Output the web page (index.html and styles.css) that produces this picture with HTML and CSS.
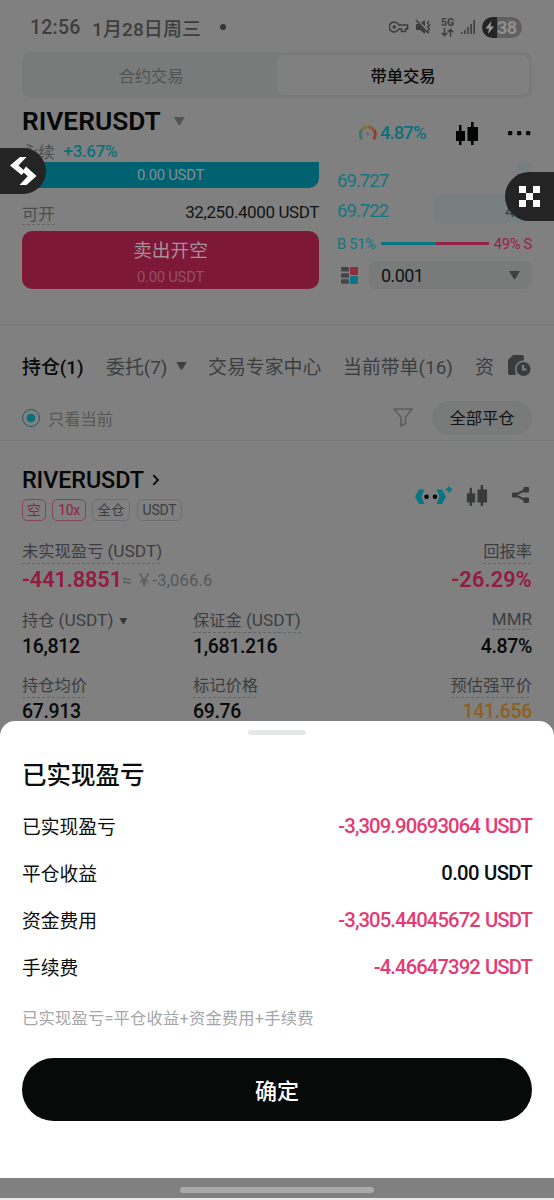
FILE: index.html
```html
<!DOCTYPE html>
<html lang="zh-CN">
<head>
<meta charset="utf-8">
<title>已实现盈亏</title>
<link rel="stylesheet" href="styles.css">
</head>
<body>
<div class="app">
  <main class="page">
    <div class="status">
      <span class="time">12:56</span><span class="date">1月28日周三</span><i class="dot"></i>
      <div class="status-icons">
        <svg width="20" height="14" viewBox="0 0 20 14" fill="none" stroke="#3d3d3d" stroke-width="1.6"><path d="M9.8 5A5 5 0 1 0 9.8 9H12.5V11.5H16.5V9H18.5V5Z"/><circle cx="5.3" cy="7" r="1" fill="#3d3d3d"/></svg>
        <svg class="mute" width="17" height="16" viewBox="0 0 17 16"><path d="M1 5H4L10 11V15L5 11H1ZM6 3.5L10 1V7.5Z" fill="#3d3d3d"/><path d="M1 1L13 14M14 2L12.4 4L14.6 6L12.4 8L14.6 10L12.4 12L14 14" fill="none" stroke="#3d3d3d" stroke-width="1.4"/></svg>
        <span class="net"><b>5G</b><svg width="13" height="9" viewBox="0 0 13 9" fill="none" stroke="#3d3d3d" stroke-width="1.4"><path d="M3.5 0V7.5M.8 4.8L3.5 7.8L6.2 4.8M9.5 9V1.5M6.8 4.2L9.5 1.2L12.2 4.2"/></svg></span>
        <svg class="signal" width="15" height="16" viewBox="0 0 15 16" fill="#3d3d3d"><path d="M0 13h1.5v2H0zM3.1 11h1.5v4H3.1zM6.2 8h1.5v7H6.2zM9.3 5h1.6v10H9.3zM12.4 1h1.6v14h-1.6z"/></svg>
        <span class="battery"><svg width="15" height="21" viewBox="0 0 15 21"><path d="M9.5 4L3.5 11.5H7L6 17L12 9.5H8.4Z" fill="#999"/></svg><b>38</b></span>
      </div>
    </div>

    <div class="segment"><span>合约交易</span><span class="active">带单交易</span></div>

    <header class="ticker">
      <div>
        <div class="pair"><span>RIVERUSDT</span><i class="tri"></i></div>
        <div class="change"><span class="perp">永续</span><b>+3.67%</b></div>
      </div>
      <div class="tools">
        <svg width="18" height="17" viewBox="0 0 18 17" fill="none" stroke-width="3"><path d="M3.2 14.2A7.2 7.2 0 0 1 3 4.7" stroke="#3d7765"/><path d="M3 4.7A7.2 7.2 0 0 1 9 2" stroke="#817638"/><path d="M9 2A7.2 7.2 0 0 1 15 5.2" stroke="#8b5d37"/><path d="M15 5.2A7.2 7.2 0 0 1 14.5 14.2" stroke="#8c3d38"/><path d="M7 7.5L10 10.5" stroke="#626464" stroke-width="1.5"/></svg>
        <span class="risk">4.87%</span>
        <svg class="candle" width="24" height="25" viewBox="0 0 24 25" fill="#020303"><path d="M4 4h2.5v6H10v10H6.5v4H4v-4H1V10h3zM16 1h2.6v5H23v14h-4.4v4H16v-4h-3.5V6H16z"/></svg>
        <svg class="more" width="24" height="6" viewBox="0 0 24 6" fill="#020303"><rect x="1" y="1" width="4.3" height="4.3" rx="1.2"/><rect x="10" y="1" width="4.3" height="4.3" rx="1.2"/><rect x="19" y="1" width="4.3" height="4.3" rx="1.2"/></svg>
      </div>
    </header>

    <section class="trade">
      <div class="order">
        <div class="buy">0.00 USDT</div>
        <div class="avail"><span class="dash">可开</span><span class="amount">32,250.4000 USDT</span></div>
        <div class="sell"><span>卖出开空</span><small>0.00 USDT</small></div>
      </div>
      <div class="book">
        <div class="level first"><span>69.727</span><i>5</i></div>
        <div class="level"><span>69.722</span><i>4.</i></div>
        <div class="ratio"><span>B 51%</span><i></i><span class="short">49% S</span></div>
        <div class="depth">
          <svg width="17" height="17" viewBox="0 0 17 17"><g fill="#434546"><rect width="8" height="4.5" rx="1"/><rect y="6.2" width="8" height="4.5" rx="1"/><rect y="12.3" width="8" height="4.5" rx="1"/></g><rect x="9" width="8" height="8" rx="1" fill="#8f2d3d"/><rect x="9" y="9" width="8" height="8" rx="1" fill="#087684"/></svg>
          <div class="select"><span>0.001</span><i class="tri dark"></i></div>
        </div>
      </div>
    </section>

    <nav class="tabs">
      <span class="on">持仓(1)</span><span class="t2">委托(7)</span><i class="tri dark"></i><span class="t3">交易专家中心</span><span class="t4">当前带单(16)</span><span class="t5">资</span>
      <svg width="24" height="23" viewBox="0 0 24 23"><path d="M1 6L6 1H15Q17 1 17 3V6.5A8.5 8.5 0 0 0 8.6 18V21H3Q1 21 1 19Z" fill="#393c3e"/><circle cx="16.5" cy="15" r="7" fill="#393c3e"/><path d="M16 11V15.5H19.5" fill="none" stroke="#808080" stroke-width="2"/></svg>
    </nav>

    <div class="filters">
      <i class="radio"></i><span class="only">只看当前</span>
      <svg width="20" height="19" viewBox="0 0 20 19" fill="none" stroke="#5b5d5e" stroke-width="1.5"><path d="M1 1H19L12.6 9V15.5L8 18V9Z"/></svg>
      <span class="close-all">全部平仓</span>
    </div>

    <section class="position">
      <div class="pos-head">
        <div>
          <div class="pos-title"><span>RIVERUSDT</span><svg width="8" height="12" viewBox="0 0 8 12" fill="none" stroke="#080909" stroke-width="1.8"><path d="M1.3 1.2L6 6L1.3 10.8"/></svg></div>
          <div class="tags"><span class="red short-tag">空</span><span class="red lev">10x</span><span>全仓</span><span class="unit">USDT</span></div>
        </div>
        <div class="pos-tools">
          <svg width="38" height="20" viewBox="0 0 38 20"><path d="M4 4.5H9.5L6.5 11.7L9.5 19H4L0 11.7ZM21.5 4.5H27L31 11.7L27 19H21.5L24.5 11.7ZM34 .5L35.4 3.1L38 4.5L35.4 5.9L34 8.5L32.6 5.9L30 4.5L32.6 3.1Z" fill="#087783"/><circle cx="11.5" cy="11.7" r="2.3" fill="#020303"/><circle cx="20" cy="11.7" r="2.3" fill="#020303"/></svg>
          <svg class="candle2" width="22" height="23" viewBox="0 0 24 25" fill="#37393a"><path d="M4 4h2.5v6H10v10H6.5v4H4v-4H1V10h3zM16 1h2.6v5H23v14h-4.4v4H16v-4h-3.5V6H16z"/></svg>
          <svg class="share" width="19" height="18" viewBox="0 0 19 18" fill="#37393a"><path d="M14 4L4 9L14 14" fill="none" stroke="#37393a" stroke-width="2"/><rect x="1" y="6.5" width="5" height="5" rx="1"/><rect x="12.5" y="1" width="5.5" height="5.5" rx="1"/><rect x="12.5" y="11.5" width="5.5" height="5.5" rx="1"/></svg>
        </div>
      </div>
      <div class="pnl-labels"><span class="dash">未实现盈亏 <em>(USDT)</em></span><span class="dash">回报率</span></div>
      <div class="pnl"><b>-441.8851</b><span>≈ ￥-3,066.6</span><b class="roe">-26.29%</b></div>
      <div class="stats">
        <div class="cell"><div class="label"><span>持仓 <em>(USDT)</em></span><i class="tri tiny"></i></div><b>16,812</b></div>
        <div class="cell"><div class="label"><span class="dash">保证金 <em>(USDT)</em></span></div><b>1,681.216</b></div>
        <div class="cell right"><div class="label mmr"><span class="dash">MMR</span></div><b>4.87%</b></div>
        <div class="cell"><div class="label"><span class="dash">持仓均价</span></div><b>67.913</b></div>
        <div class="cell"><div class="label"><span class="dash">标记价格</span></div><b>69.76</b></div>
        <div class="cell right"><div class="label"><span class="dash">预估强平价</span></div><b class="liq">141.656</b></div>
      </div>
    </section>
  </main>

  <section class="sheet">
    <i class="handle"></i>
    <h1>已实现盈亏</h1>
    <div class="row"><span>已实现盈亏</span><b class="neg">-3,309.90693064 USDT</b></div>
    <div class="row"><span>平仓收益</span><b class="zero">0.00 USDT</b></div>
    <div class="row"><span>资金费用</span><b class="neg">-3,305.44045672 USDT</b></div>
    <div class="row"><span>手续费</span><b class="neg">-4.46647392 USDT</b></div>
    <p>已实现盈亏=平仓收益+资金费用+手续费</p>
    <button>确定</button>
  </section>
  <footer class="navbar"><i></i></footer>

  <div class="float left"><svg width="28" height="30" viewBox="0 0 28 30" fill="#fff"><path d="M11 1H17.5L9.5 9.5L16 15.3L12.5 19L1 9.5ZM17 10.5L27.5 20L17.5 29H10.5L18.7 20.3L13.5 15.5Z"/></svg></div>
  <div class="float rightside"><svg width="21" height="21" viewBox="0 0 21 21" fill="#fff"><path d="M0 0h7v7H0zM14 0h7v7h-7zM7 7h7v7H7zM0 14h7v7H0zM14 14h7v7h-7z"/></svg></div>
</div>
</body>
</html>
```
FILE: styles.css
```css
* { box-sizing: border-box; }
body {
  margin: 0;
  background: #fff;
  font-family: Roboto, "Noto Sans CJK SC", sans-serif;
}
i, em { font-style: normal; }
svg { display: block; flex: none; }
.app {
  position: relative;
  width: 554px;
  height: 1200px;
  overflow: hidden;
  display: flex;
  flex-direction: column;
  background: #808080;
  white-space: nowrap;
}
.page { height: 721px; flex: none; }

/* status bar */
.status {
  height: 52px;
  padding: 2px 32px 0 30px;
  display: flex;
  align-items: center;
  color: #3d3d3d;
  font: 500 19.5px Roboto, "Noto Sans CJK SC", sans-serif;
}
.time { width: 62px; letter-spacing: .2px; }
.date { font-size: 19px; letter-spacing: .1px; }
.dot { width: 6px; height: 6px; border-radius: 50%; background: #353535; margin-left: 19px; }
.status-icons { margin-left: auto; display: flex; align-items: center; }
.mute { margin-left: 6px; }
.net { margin-left: 8px; width: 15px; display: flex; flex-direction: column; align-items: center; gap: 1px; }
.net b { font-size: 10.5px; line-height: 9px; }
.signal { margin-left: 6px; }
.battery {
  margin-left: 6px;
  width: 40px;
  height: 21px;
  border-radius: 11px;
  background: linear-gradient(90deg, #242424 15px, #606060 15px);
  display: flex;
  align-items: center;
  overflow: hidden;
}
.battery b { color: #909090; font-size: 18px; letter-spacing: -.6px; }

.segment {
  height: 46px;
  margin: 0 22px;
  padding: 3px;
  border-radius: 9px;
  background: #797a7a;
  display: grid;
  grid-template-columns: 252px 1fr;
  font-size: 16.3px;
  color: #505354;
}
.segment span { display: flex; align-items: center; justify-content: center; }
.segment .active { background: #808080; border-radius: 7px; color: #080909; font-weight: 500; }

.tri {
  width: 11px;
  height: 8px;
  background: #515354;
  clip-path: polygon(0 0, 100% 0, 57% 100%, 43% 100%);
  flex: none;
}
.tri.dark { background: #3d3f40; }
.tri.tiny { width: 8px; height: 6px; margin-left: 6px; background: #36393a; }

.ticker { height: 64px; padding: 8px 23px 0 22px; display: flex; justify-content: space-between; }
.pair { display: flex; align-items: center; height: 30px; font-weight: 600; font-size: 26.3px; color: #050606; }
.pair .tri { margin-left: 13px; }
.change { height: 26px; display: flex; align-items: center; margin-top: 2px; font-size: 16.3px; color: #4a4d4f; }
.change b { margin-left: 9px; font-weight: 500; font-size: 17px; color: #08717d; letter-spacing: -.35px; }
.tools { display: flex; align-items: center; height: 54px; }
.risk { font-size: 18.5px; font-weight: 500; color: #08717d; letter-spacing: -.95px; margin-left: 3px; width: 46px; }
.candle { margin-left: 29px; }
.more { margin-left: 28px; }

.trade { height: 163px; border-bottom: 1px solid #777878; padding: 0 22px; display: flex; justify-content: space-between; }
.order { width: 297px; }
.buy { height: 26px; background: #006271; border-radius: 0 0 10px 10px; color: #839094; display: flex; justify-content: center; align-items: center; font-size: 14.8px; letter-spacing: -.25px; }
.avail { height: 43px; display: flex; justify-content: space-between; align-items: center; font-size: 16.3px; color: #4a4d4f; padding-top: 6px; }
.amount { color: #111414; font-size: 17px; letter-spacing: -.4px; margin-top: -2px; }
.dash { background: repeating-linear-gradient(90deg, #636566 0 3px, transparent 3px 5px) bottom / 100% 1px no-repeat; }
.sell { height: 58px; background: #7d1839; border-radius: 10px; color: #a59098; display: flex; flex-direction: column; align-items: center; padding-top: 6px; font-size: 18.7px; line-height: 29px; }
.sell small { font-size: 14.8px; line-height: 22px; letter-spacing: -.25px; color: #925165; }
.book { width: 195px; }
.level { height: 28px; margin-top: 2px; padding-top: 3px; display: flex; align-items: center; justify-content: space-between; font-size: 18.5px; letter-spacing: -.95px; color: #147680; background: linear-gradient(#77807f, #77807f) right / 98px 100% no-repeat; }
.level.first { background-size: 15px 100%; height: 31px; margin: 0; padding-top: 6px; }
.level i { width: 27px; color: #3a4142; }
.level.first i { width: 17px; }
.ratio { height: 38px; padding-top: 3px; display: flex; align-items: center; font-size: 14.7px; letter-spacing: -.3px; color: #147680; }
.ratio i { flex: 1; height: 3px; margin: 0 5px; background: linear-gradient(90deg, #087784 51%, #94224b 51%); }
.ratio .short { color: #94224b; }
.depth { display: flex; align-items: center; justify-content: space-between; padding-left: 4px; }
.select { width: 163px; height: 28px; border-radius: 7px; background: #797a7a; display: flex; align-items: center; justify-content: space-between; padding: 0 12px; font-size: 18px; letter-spacing: -.6px; color: #101313; }

.tabs { height: 69px; margin: 6px 0 2px; padding: 0 23px 0 22px; display: flex; align-items: center; font-size: 18.9px; color: #3b3e40; }
.tabs .on { width: 84px; color: #080909; font-weight: 500; }
.t2 { width: 70px; }
.t3 { margin-left: 21px; width: 135px; }
.t4 { width: 132px; }
.tabs svg { margin-left: auto; }
.filters { height: 39px; border-bottom: 1px solid #797a7a; display: flex; align-items: center; padding: 0 22px 7px; font-size: 16.3px; color: #55585a; }
.radio { width: 18px; height: 18px; border: 1.5px solid #245a64; border-radius: 50%; background: radial-gradient(circle, #08717d 4px, transparent 4.7px); margin-top: 1px; }
.only { margin-left: 8px; }
.filters svg { margin-left: auto; margin-right: 19px; }
.close-all { width: 100px; height: 34px; line-height: 35px; margin-top: 1px; border-radius: 17px; background: #797a7a; color: #101313; text-align: center; flex: none; }

.position { padding: 23px 22px 0; color: #3b3e40; }
.pos-head { display: flex; justify-content: space-between; height: 73px; }
.pos-title { height: 32px; display: flex; align-items: center; font-weight: 500; font-size: 23.4px; letter-spacing: -.1px; color: #050606; }
.pos-title svg { margin-left: 8px; }
.tags { margin-top: 3px; display: flex; gap: 6.5px; font-size: 13.5px; }
.tags span { height: 22px; padding: 0 4.5px; border: 1px solid #6c6e6f; border-radius: 5px; line-height: 21px; }
.tags .red { color: #931d47; border-color: #83465c; }
.tags .short-tag { padding: 0 4.2px; }
.tags .lev { padding: 0 4.8px; font-size: 14px; letter-spacing: -.35px; }
.tags .unit { padding: 0 5px; font-size: 14px; letter-spacing: -.25px; }
.pos-tools { display: flex; align-items: center; height: 62px; padding-right: 2px; }
.candle2 { margin-left: 13px; }
.share { margin-left: 23px; }
.pnl-labels { display: flex; justify-content: space-between; font-size: 16.3px; line-height: 24px; padding-top: 3px; }
.pnl-labels em, .label em { font-size: 17.3px; line-height: 1; }
.pnl { height: 34px; padding-bottom: 4px; display: flex; align-items: center; font-size: 16.6px; color: #555859; }
.pnl b { color: #951944; font-size: 21.7px; font-weight: 600; letter-spacing: -.1px; }
.pnl .roe { margin-left: auto; letter-spacing: .15px; }
.pnl span { letter-spacing: .15px; }
.stats { display: grid; grid-template-columns: 171px 1fr 120px; padding-top: 10px; }
.cell { height: 65px; }
.cell b { display: block; font-size: 19.5px; line-height: 26px; font-weight: 500; color: #080a0a; letter-spacing: -.35px; }
.label { height: 26px; font-size: 16.3px; line-height: 24px; display: flex; align-items: center; }
.label.mmr { align-items: flex-start; font-size: 17px; line-height: 22px; }
.right .label { justify-content: flex-end; }
.right { text-align: right; }
.cell .liq { color: #8e601c; }

/* bottom sheet */
.sheet { height: 457px; flex: none; background: #fff; border-radius: 15px 15px 0 0; padding: 9px 22px 0; color: #0b0e0e; }
.handle { display: block; width: 58px; height: 5px; border-radius: 3px; background: #e6e7e9; margin: 0 auto; }
.sheet h1 { margin: 21px 0 6px; font-size: 24.5px; font-weight: 500; line-height: 40px; }
.row { height: 47.2px; display: flex; align-items: center; justify-content: space-between; font-size: 18.8px; }
.row span { margin-top: -1px; }
.row b { font-size: 20.3px; font-weight: 500; letter-spacing: -.92px; word-spacing: 1px; }
.row .zero { letter-spacing: -.7px; }
.row .neg { color: #e63b72; }
.sheet p { margin: 14px 0 25px; font-size: 16.3px; letter-spacing: .2px; line-height: 28px; color: #a3a6aa; }
.sheet button { display: block; width: 100%; height: 63px; padding: 0; border: 0; border-radius: 32px; background: #080a0a; color: #fff; font: 500 22px "Noto Sans CJK SC", sans-serif; }
.navbar { height: 22px; flex: none; border-bottom: 2px solid #eaeaea; display: flex; align-items: center; justify-content: center; padding-top: 3px; }
.navbar i { width: 194px; height: 6px; border-radius: 3px; background: #aaa; }

/* floating handles over the page */
.float { position: absolute; background: #242424; display: flex; align-items: center; }
.left { left: 0; top: 148px; width: 46px; height: 46px; border-radius: 0 23px 23px 0; padding-left: 9px; }
.rightside { right: 0; top: 172px; width: 49px; height: 49px; border-radius: 25px 0 0 25px; padding-left: 14px; }
```
